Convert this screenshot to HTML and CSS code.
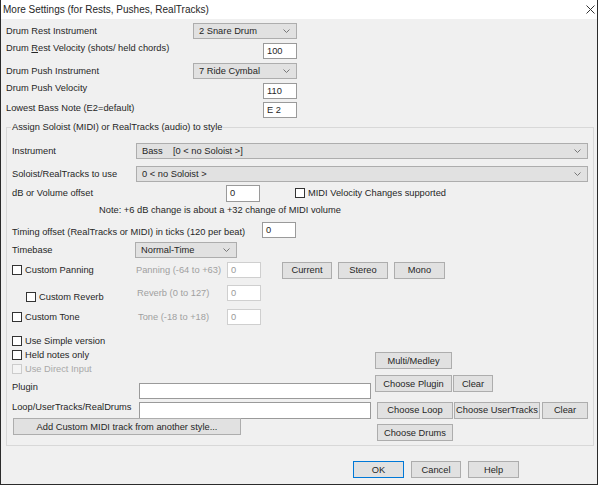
FILE: index.html
```html
<!DOCTYPE html>
<html>
<head>
<meta charset="utf-8">
<title>More Settings</title>
<link rel="stylesheet" href="styles.css">
</head>
<body>
<div class="window">
  <div class="titlebar">
    <span class="title">More Settings (for Rests, Pushes, RealTracks)</span>
    <svg class="close" width="9" height="9" viewBox="0 0 9 9"><path d="M0.5 0.5 L8.5 8.5 M8.5 0.5 L0.5 8.5" stroke="#333" stroke-width="1" fill="none"/></svg>
  </div>
  <div class="content">
    <div class="top">
      <div class="row ra"><span class="lbl">Drum Rest Instrument</span><div class="combo">2 Snare Drum<svg class="chev" width="7" height="4" viewBox="0 0 7 4"><polyline points="0.5,0.5 3.5,3.5 6.5,0.5" stroke="#777" fill="none"/></svg></div></div>
      <div class="row rb"><span class="lbl up">Drum <u>R</u>est Velocity (shots/ held chords)</span><div class="field">100</div></div>
      <div class="row rc"><span class="lbl">Drum Push Instrument</span><div class="combo">7 Ride Cymbal<svg class="chev" width="7" height="4" viewBox="0 0 7 4"><polyline points="0.5,0.5 3.5,3.5 6.5,0.5" stroke="#777" fill="none"/></svg></div></div>
      <div class="row rd"><span class="lbl up">Drum Push Velocity</span><div class="field">110</div></div>
      <div class="row re"><span class="lbl up">Lowest Bass Note (E2=default)</span><div class="field">E 2</div></div>
    </div>

    <div class="group">
      <span class="legend">Assign Soloist (MIDI) or RealTracks (audio) to style</span>
      <div class="row g1"><span class="lbl w124">Instrument</span><div class="combo grow"><span>Bass&nbsp;&nbsp;&nbsp;&nbsp;[0 &lt; no Soloist &gt;]</span><svg class="chev" width="7" height="4" viewBox="0 0 7 4"><polyline points="0.5,0.5 3.5,3.5 6.5,0.5" stroke="#777" fill="none"/></svg></div></div>
      <div class="row g2"><span class="lbl w124">Soloist/RealTracks to use</span><div class="combo grow"><span>0 &lt; no Soloist &gt;</span><svg class="chev" width="7" height="4" viewBox="0 0 7 4"><polyline points="0.5,0.5 3.5,3.5 6.5,0.5" stroke="#777" fill="none"/></svg></div></div>
      <div class="row g3"><span class="lbl w214">dB or Volume offset</span><div class="field tall">0</div><span class="chk ml35"><span class="cb"></span>MIDI Velocity Changes supported</span></div>
      <div class="row g4"><span class="note">Note: +6 dB change is about a +32 change of MIDI volume</span></div>
      <div class="row g5"><span class="lbl w250 down">Timing offset (RealTracks or MIDI) in ticks (120 per beat)</span><div class="field">0</div></div>
      <div class="row g6"><span class="lbl w123">Timebase</span><div class="combo w102">Normal-Time<svg class="chev" width="7" height="4" viewBox="0 0 7 4"><polyline points="0.5,0.5 3.5,3.5 6.5,0.5" stroke="#777" fill="none"/></svg></div></div>
      <div class="row g7">
        <span class="chk w124"><span class="cb"></span>Custom Panning</span>
        <span class="grey w91">Panning (-64 to +63)</span>
        <div class="field dis">0</div>
        <div class="btn b50 ml21">Current</div>
        <div class="btn b50 ml6">Stereo</div>
        <div class="btn b51 ml6">Mono</div>
      </div>
      <div class="row g8">
        <span class="chk w124 ind lowered"><span class="cb"></span>Custom Reverb</span>
        <span class="grey w91 pl1">Reverb (0 to 127)</span>
        <div class="field dis">0</div>
      </div>
      <div class="row g9">
        <span class="chk w124"><span class="cb"></span>Custom Tone</span>
        <span class="grey w91 pl2">Tone (-18 to +18)</span>
        <div class="field dis">0</div>
      </div>
      <div class="row g10"><span class="chk"><span class="cb"></span>Use Simple version</span></div>
      <div class="row g11"><span class="chk w363"><span class="cb"></span>Held notes only</span><div class="btn b77 top4">Multi/Medley</div></div>
      <div class="row g12"><span class="chk disabled"><span class="cb"></span>Use Direct Input</span></div>
      <div class="row g13">
        <span class="lbl w127 atop">Plugin</span>
        <div class="field wide atbottom"></div>
        <div class="btn b77 ml4 attop">Choose Plugin</div>
        <div class="btn b40 ml1 attop">Clear</div>
      </div>
      <div class="row g14">
        <span class="lbl w127 up6">Loop/UserTracks/RealDrums</span>
        <div class="field wide tall"></div>
        <div class="btn b76 ml6">Choose Loop</div>
        <div class="btn b86 ml1">Choose UserTracks</div>
        <div class="btn b46 ml2">Clear</div>
      </div>
      <div class="row g15">
        <div class="btn b228 ml1 attop">Add Custom MIDI track from another style...</div>
        <div class="btn b76 ml136 atbottom">Choose Drums</div>
      </div>
    </div>

    <div class="footer">
      <div class="btn b51 default">OK</div>
      <div class="btn b50 ml7">Cancel</div>
      <div class="btn b51 ml7">Help</div>
    </div>
  </div>
</div>
</body>
</html>
```

FILE: styles.css
```css
html, body {
  margin: 0;
  padding: 0;
  background: #ffffff;
}
body {
  font-family: "Liberation Sans Narrow", "Liberation Sans", Arial, sans-serif;
  font-size: 9.3px;
  color: #262626;
}
.window {
  width: 598px;
  height: 485px;
  box-sizing: border-box;
  border: 1px solid #2b2b2b;
  border-top: none;
  background: #f0f0f0;
  display: flex;
  flex-direction: column;
}
.titlebar {
  height: 19px;
  flex: none;
  background: #ffffff;
  display: flex;
  align-items: center;
  justify-content: space-between;
  padding: 0 1px 0 2px;
  font-size: 10px;
}
.close {
  display: block;
  margin-right: 1px;
  margin-top: -1px;
}
.content {
  padding: 2px 0 0 5px;
}
.top {
  width: 291px;
}
.row {
  display: flex;
  align-items: center;
  white-space: nowrap;
}
.top .row {
  justify-content: space-between;
}
.ra { height: 19px; }
.rb { height: 21px; }
.rc { height: 19px; }
.rd { height: 21px; }
.re { height: 18px; }
.lbl {
  flex: none;
  line-height: 12px;
}
.up { margin-bottom: 5px; }
.up6 { margin-bottom: 6px; }
.down { margin-top: 3px; }
.combo {
  box-sizing: border-box;
  height: 16px;
  border: 1px solid #adadad;
  background: #e1e1e1;
  display: flex;
  align-items: center;
  justify-content: space-between;
  padding: 0 6px 0 5px;
  flex: none;
}
.top .combo { width: 104px; }
.combo.grow { flex: 1; }
.combo.w102 { width: 102px; }
.chev { display: block; }
.field {
  box-sizing: border-box;
  height: 16px;
  width: 34px;
  border: 1px solid #9a9a9a;
  background: #ffffff;
  padding-left: 3px;
  display: flex;
  align-items: center;
  flex: none;
}
.field.tall { height: 17px; }
.field.wide { width: 232px; }
.field.dis {
  border-color: #cfcfcf;
  color: #9a9a9a;
}
.group {
  position: relative;
  margin-top: 8px;
  width: 588px;
  box-sizing: border-box;
  border: 1px solid #d8d8d8;
  padding: 13px 5px 4px 5px;
}
.legend {
  position: absolute;
  top: -7px;
  left: 4px;
  line-height: 12px;
  padding: 0 1px;
  background: #f0f0f0;
}
.w124 { width: 124px; }
.w123 { width: 123px; }
.w127 { width: 127px; }
.w214 { width: 214px; }
.w250 { width: 250px; }
.w91 { width: 91px; flex: none; }
.w363 { width: 363px; }
.pl1 { padding-left: 1px; box-sizing: border-box; }
.pl2 { padding-left: 2px; box-sizing: border-box; }
.g1 { height: 19px; }
.g2 { height: 19px; margin-top: 4px; }
.g3 { height: 20px; }
.g4 { height: 16px; align-items: flex-start; }
.note { margin-left: 87px; line-height: 14px; }
.g5 { height: 22px; }
.g6 { height: 18px; }
.g7 { height: 22px; }
.g8 { height: 20px; margin-top: 2px; }
.g9 { height: 22px; margin-top: 3px; }
.g10 { height: 14px; margin-top: 6px; }
.g11 { height: 14px; }
.g12 { height: 13px; }
.g13 { height: 24px; }
.g14 { height: 20px; margin-top: 1px; }
.g15 { height: 23px; margin-top: -2px; }
.chk {
  display: flex;
  align-items: center;
  flex: none;
  line-height: 12px;
}
.chk.ind { padding-left: 14px; box-sizing: border-box; }
.lowered { margin-top: 8px; }
.cb {
  width: 10px;
  height: 10px;
  box-sizing: border-box;
  border: 1px solid #333333;
  background: #ffffff;
  margin-right: 3px;
  flex: none;
}
.chk.disabled { color: #a8a8a8; }
.chk.disabled .cb { border-color: #cccccc; background: #f4f4f4; }
.grey { color: #a0a0a0; }
.btn {
  box-sizing: border-box;
  height: 17px;
  border: 1px solid #adadad;
  background: #e1e1e1;
  display: flex;
  align-items: center;
  justify-content: center;
  flex: none;
}
.btn.default { border-color: #0078d7; }
.b40 { width: 40px; }
.b46 { width: 46px; }
.b50 { width: 50px; }
.b51 { width: 51px; }
.b76 { width: 76px; }
.b77 { width: 77px; }
.b86 { width: 86px; }
.b228 { width: 228px; }
.ml1 { margin-left: 1px; }
.ml2 { margin-left: 2px; }
.ml4 { margin-left: 4px; }
.ml6 { margin-left: 6px; }
.ml7 { margin-left: 7px; }
.ml21 { margin-left: 21px; }
.ml35 { margin-left: 35px; }
.ml136 { margin-left: 136px; }
.top4 { align-self: flex-start; margin-top: 4px; }
.attop { align-self: flex-start; }
.atbottom { align-self: flex-end; }
.atop { align-self: flex-start; margin-top: 6px; }
.footer {
  display: flex;
  margin-top: 15px;
  margin-left: 347px;
}
```
